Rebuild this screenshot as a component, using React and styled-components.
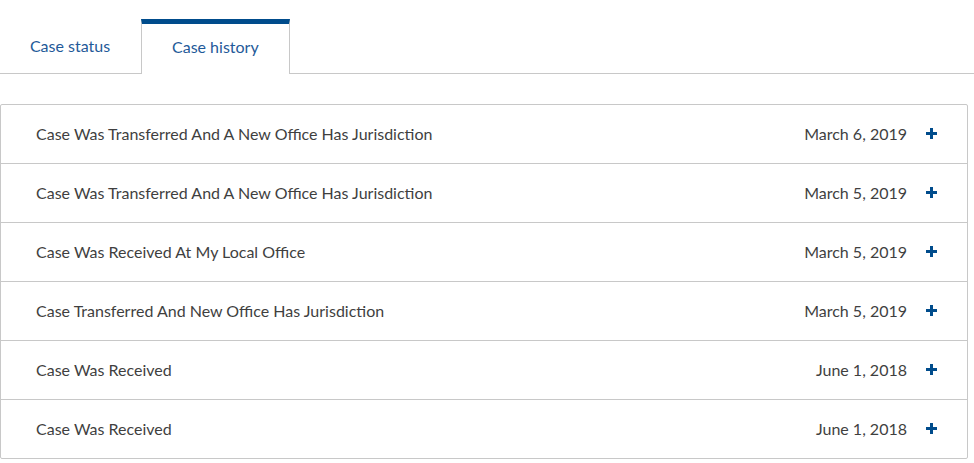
import React, { useState } from "react";
import styled, { createGlobalStyle } from "styled-components";

const GlobalStyle = createGlobalStyle`
  html, body {
    margin: 0;
    padding: 0;
    background: #ffffff;
  }
  body {
    font-family: "Lato", "Open Sans", "Liberation Sans", sans-serif;
    -webkit-font-smoothing: antialiased;
  }
`;

const Page = styled.div`
  width: 974px;
  padding-top: 19px;
  box-sizing: border-box;
`;

const TabBar = styled.div`
  display: flex;
  align-items: flex-end;
  height: 54px;
  border-bottom: 1px solid #c8c8c8;
  box-sizing: content-box;
`;

const Tab = styled.button`
  height: ${(p) => (p.$active ? "55px" : "54px")};
  margin-bottom: ${(p) => (p.$active ? "-1px" : "0")};
  padding: 0 30px 6px;
  display: flex;
  align-items: center;
  justify-content: center;
  background: #ffffff;
  border: none;
  border-top: 5px solid ${(p) => (p.$active ? "#004c8c" : "transparent")};
  border-left: 1px solid ${(p) => (p.$active ? "#c8c8c8" : "transparent")};
  border-right: 1px solid ${(p) => (p.$active ? "#c8c8c8" : "transparent")};
  box-sizing: border-box;
  font-family: inherit;
  font-size: 16px;
  color: #1f5a99;
  cursor: pointer;
  &:first-child {
    border-left: none;
    padding: 0 0 6px;
    width: 141px;
  }
`;

const Card = styled.div`
  margin-top: 30px;
  width: 968px;
  border: 1px solid #c8c8c8;
  border-radius: 2px;
  box-sizing: border-box;
`;

const Row = styled.div`
  display: flex;
  align-items: center;
  height: 59px;
  padding: 0 30px 2px 35px;
  border-top: 1px solid #c8c8c8;
  box-sizing: border-box;
  font-size: 16px;
  color: #3f3f3f;
  &:first-child {
    border-top: none;
    height: 58px;
  }
`;

const Title = styled.span`
  flex: 1;
`;

const DateText = styled.span`
  margin-right: 19px;
`;

const PlusIcon = () => (
  <svg width="11" height="11" viewBox="0 0 11 11" aria-hidden="true">
    <rect x="4" y="0" width="3" height="11" fill="#004c8c" />
    <rect x="0" y="4" width="11" height="3" fill="#004c8c" />
  </svg>
);

const history = [
  { title: "Case Was Transferred And A New Office Has Jurisdiction", date: "March 6, 2019" },
  { title: "Case Was Transferred And A New Office Has Jurisdiction", date: "March 5, 2019" },
  { title: "Case Was Received At My Local Office", date: "March 5, 2019" },
  { title: "Case Transferred And New Office Has Jurisdiction", date: "March 5, 2019" },
  { title: "Case Was Received", date: "June 1, 2018" },
  { title: "Case Was Received", date: "June 1, 2018" },
];

const App = () => {
  const [tab, setTab] = useState("history");
  return (
    <>
      <GlobalStyle />
      <Page>
        <TabBar>
          <Tab $active={tab === "status"} onClick={() => setTab("status")}>
            Case status
          </Tab>
          <Tab $active={tab === "history"} onClick={() => setTab("history")}>
            Case history
          </Tab>
        </TabBar>
        <Card>
          {history.map((item, i) => (
            <Row key={i}>
              <Title>{item.title}</Title>
              <DateText>{item.date}</DateText>
              <PlusIcon />
            </Row>
          ))}
        </Card>
      </Page>
    </>
  );
};

export default App;
